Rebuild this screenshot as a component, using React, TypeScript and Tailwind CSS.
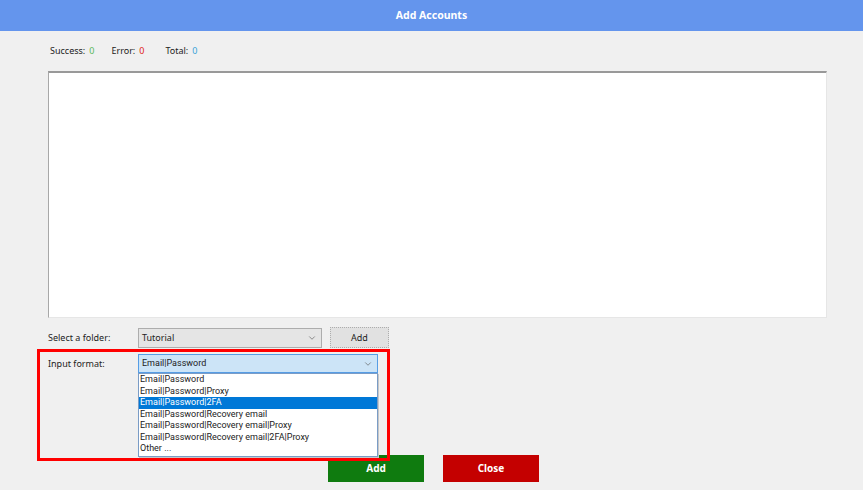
import { ChevronDown } from "lucide-react";

const formats = [
  "Email|Password",
  "Email|Password|Proxy",
  "Email|Password|2FA",
  "Email|Password|Recovery email",
  "Email|Password|Recovery email|Proxy",
  "Email|Password|Recovery email|2FA|Proxy",
  "Other ...",
];

const SELECTED = 2;

export default function App() {
  return (
    <div className="relative h-[490px] w-[863px] overflow-hidden bg-[#f0f0f0] font-['Noto_Sans',sans-serif] text-[9px] text-[#222]">
      {/* Title bar */}
      <div className="flex h-[31px] items-center justify-center bg-[#6495ed] text-[10.5px] font-bold text-white">
        Add Accounts
      </div>

      <div className="flex flex-col pl-[48px] pr-[36px]">
        {/* Counters */}
        <div className="mt-[13px] flex h-[14px] items-center pl-[2px]">
          <span>Success:</span>
          <span className="ml-[4px] text-[#5cb85c]">0</span>
          <span className="ml-[17px]">Error:</span>
          <span className="ml-[4px] text-[#e02020]">0</span>
          <span className="ml-[21px]">Total:</span>
          <span className="ml-[4px] text-[#3ba3d8]">0</span>
        </div>

        {/* Accounts textarea */}
        <div className="mt-[13px] h-[247px] w-[779px] border-t-2 border-l border-r border-b border-t-[#999] border-l-[#a8a8a8] border-r-[#e6e6e6] border-b-[#e6e6e6] bg-white" />

        {/* Folder row */}
        <div className="mt-[9px] flex h-[21px] items-center">
          <span className="w-[90px] pl-[0px]">Select a folder:</span>
          <div className="flex h-[20px] w-[184px] items-center justify-between border border-[#adadad] bg-[#e5e5e5] pl-[3px] pr-[4px]">
            <span>Tutorial</span>
            <ChevronDown className="h-[10px] w-[10px] text-[#555]" strokeWidth={1.5} />
          </div>
          <button className="ml-[8px] h-[21px] w-[59px] border border-dotted border-[#adadad] bg-[#e1e1e1] text-[9px] text-[#222]">
            Add
          </button>
        </div>

        {/* Input format row */}
        <div className="relative mt-[6px] flex h-[19px] items-center">
          <span className="w-[90px]">Input format:</span>
          <div className="relative w-[240px] font-['Roboto',sans-serif]">
            <div className="flex h-[19px] items-center justify-between border border-[#569de5] bg-[#cce4f7] pl-[3px] pr-[4px]">
              <span>Email|Password</span>
              <ChevronDown className="h-[10px] w-[10px] text-[#555]" strokeWidth={1.5} />
            </div>
            {/* Open list */}
            <div className="absolute left-0 top-[19px] z-10 flex w-[240px] flex-col border border-[#7a9cc6] bg-white pb-[1px] shadow-[1px_1px_0_#c7c7c7]">
              {formats.map((f, i) => (
                <div
                  key={f}
                  className={`flex h-[11.5px] items-center px-[1px] leading-none ${
                    i === SELECTED ? "bg-[#0078d7] text-white" : "text-[#222]"
                  }`}
                >
                  {f}
                </div>
              ))}
            </div>
          </div>
        </div>

        {/* Action buttons */}
        <div className="mt-[82px] flex gap-[19px] pl-[280px]">
          <button className="h-[27px] w-[96px] bg-[#0f7b0f] text-[10px] font-bold text-white">Add</button>
          <button className="h-[27px] w-[96px] bg-[#c40000] text-[10px] font-bold text-white">Close</button>
        </div>
      </div>

      {/* Red highlight annotation */}
      <div className="pointer-events-none absolute left-[37px] top-[349px] z-20 h-[112px] w-[353px] border-[3px] border-[#ff0000]" />
    </div>
  );
}
